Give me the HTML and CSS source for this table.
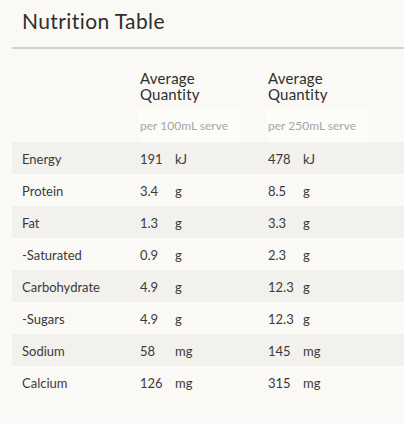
FILE: index.html
```html
<!DOCTYPE html>
<html>
<head>
<meta charset="utf-8">
<link rel="stylesheet" href="styles.css">
</head>
<body>
<div class="page">
  <div class="title-bar"><h1 class="title">Nutrition Table</h1></div>
  <div class="table">
    <div class="row head">
      <div class="label"></div>
      <div class="qty">Average<br>Quantity</div>
      <div class="qty">Average<br>Quantity</div>
    </div>
    <div class="row sub">
      <div class="label"></div>
      <div class="serve"><span>per 100mL serve</span></div>
      <div class="serve"><span>per 250mL serve</span></div>
    </div>
    <div class="row data"><div class="label">Energy</div><div class="val">191</div><div class="unit">kJ</div><div class="val">478</div><div class="unit">kJ</div></div>
    <div class="row data"><div class="label">Protein</div><div class="val">3.4</div><div class="unit">g</div><div class="val">8.5</div><div class="unit">g</div></div>
    <div class="row data"><div class="label">Fat</div><div class="val">1.3</div><div class="unit">g</div><div class="val">3.3</div><div class="unit">g</div></div>
    <div class="row data"><div class="label">-Saturated</div><div class="val">0.9</div><div class="unit">g</div><div class="val">2.3</div><div class="unit">g</div></div>
    <div class="row data"><div class="label">Carbohydrate</div><div class="val">4.9</div><div class="unit">g</div><div class="val">12.3</div><div class="unit">g</div></div>
    <div class="row data"><div class="label">-Sugars</div><div class="val">4.9</div><div class="unit">g</div><div class="val">12.3</div><div class="unit">g</div></div>
    <div class="row data"><div class="label">Sodium</div><div class="val">58</div><div class="unit">mg</div><div class="val">145</div><div class="unit">mg</div></div>
    <div class="row data"><div class="label">Calcium</div><div class="val">126</div><div class="unit">mg</div><div class="val">315</div><div class="unit">mg</div></div>
  </div>
</div>
</body>
</html>
```

FILE: styles.css
```css
html, body {
  margin: 0;
  padding: 0;
  background: #faf9f5;
}
body {
  font-family: Lato, "Open Sans", sans-serif;
  color: #3a3a3a;
}
.page {
  width: 404px;
  height: 424px;
  overflow: hidden;
}
.title-bar {
  margin-left: 12px;
  height: 47px;
  border-bottom: 2px solid #d2d0cc;
}
.title {
  margin: 0;
  padding: 9px 0 0 10px;
  font-size: 21px;
  font-weight: 400;
  letter-spacing: 0.4px;
  line-height: 24px;
  color: #2e2e2e;
}
.table {
  margin-left: 12px;
}
.row {
  display: grid;
  grid-template-columns: 128px 35px 93px 35px 1fr;
}
.row .label {
  padding-left: 10px;
}
.head {
  padding-top: 21px;
}
.qty {
  grid-column: span 2;
  font-size: 15px;
  line-height: 16px;
  letter-spacing: 0.2px;
  color: #2e2e2e;
}
.sub {
  padding-top: 6px;
  height: 40px;
  box-sizing: border-box;
}
.serve {
  grid-column: span 2;
  margin-left: -2px;
}
.serve span {
  display: block;
  width: 102px;
  height: 34px;
  padding: 11px 0 0 2px;
  box-sizing: border-box;
  background: rgba(255, 255, 255, 0.45);
  font-size: 12px;
  line-height: 14px;
  color: #a8a6a2;
}
.data {
  height: 32px;
  padding-top: 1px;
  box-sizing: border-box;
  align-items: center;
  font-size: 13px;
  color: #3a3a3a;
}
.data:nth-child(odd) {
  background: #f2f1ed;
}
```
